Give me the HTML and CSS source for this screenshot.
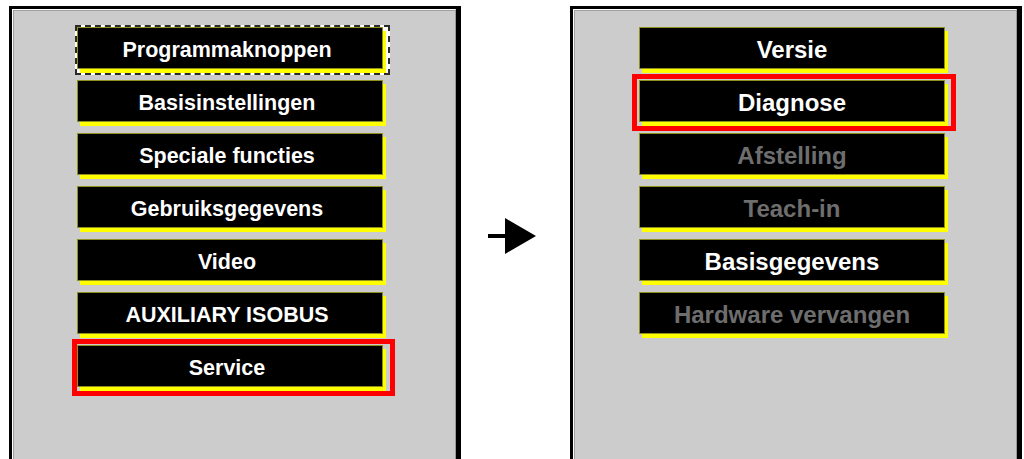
FILE: index.html
```html
<!DOCTYPE html>
<html lang="nl">
<head>
    <meta charset="UTF-8">
    <meta name="viewport" content="width=device-width, initial-scale=1.0">
    <title>Menu - Service</title>
    <link rel="stylesheet" href="styles.css">
</head>
<body>
    <div class="screens">
        <div class="panel panel-left">
            <div class="inner">
                <div class="menu">
                    <div class="focus"><div class="btn">Programmaknoppen</div></div>
                    <div class="btn">Basisinstellingen</div>
                    <div class="btn">Speciale functies</div>
                    <div class="btn">Gebruiksgegevens</div>
                    <div class="btn">Video</div>
                    <div class="btn">AUXILIARY ISOBUS</div>
                    <div class="selected"><div class="btn">Service</div></div>
                </div>
            </div>
        </div>

        <div class="arrow">
            <svg width="48" height="36" viewBox="0 0 48 36">
                <rect x="0" y="16" width="20" height="4" fill="#000"/>
                <polygon points="17,0 48,18 17,36" fill="#000"/>
            </svg>
        </div>

        <div class="panel panel-right">
            <div class="inner">
                <div class="menu">
                    <div class="btn">Versie</div>
                    <div class="selected right"><div class="btn">Diagnose</div></div>
                    <div class="btn disabled">Afstelling</div>
                    <div class="btn disabled">Teach-in</div>
                    <div class="btn">Basisgegevens</div>
                    <div class="btn disabled">Hardware vervangen</div>
                </div>
            </div>
        </div>
    </div>
</body>
</html>
```

FILE: styles.css
```css
body {
    margin: 0;
    padding: 6px 0 0 9px;
    background-color: #fff;
    font-family: "Liberation Sans", Arial, sans-serif;
    overflow: hidden;
    height: 459px;
    box-sizing: border-box;
}
.screens {
    display: flex;
    align-items: center;
}
.panel {
    width: 452px;
    height: 460px;
    box-sizing: border-box;
    border-style: solid;
    border-color: #000;
    border-width: 3px 5px 0 3px;
    background-color: #fff;
}
.inner {
    height: 100%;
    box-sizing: border-box;
    border: 1px solid #fff;
    border-right-color: #999;
    box-shadow: inset 1px 1px 0 #a0a0a0;
    background-color: #cccccc;
}
.panel-left .inner {
    padding: 17px 0 0 64px;
}
.panel-right .inner {
    padding: 17px 0 0 65px;
}
.menu {
    display: flex;
    flex-direction: column;
    align-items: flex-start;
    gap: 11px;
}
.btn {
    width: 306px;
    height: 42px;
    box-sizing: border-box;
    padding: 5px 6px 0 0;
    background-color: #000;
    border: 1px solid #8f8f1c;
    box-shadow: 3px 4px 0 #ffff00;
    color: #fff;
    font-size: 21.5px;
    font-weight: bold;
    display: flex;
    align-items: center;
    justify-content: center;
}
.panel-right .btn {
    font-size: 24px;
    padding: 3px 0 0 0;
}
.btn.disabled {
    color: #6e6e6e;
}
.focus {
    border: 2px dashed #2a2a2a;
    background-color: #fff;
    padding: 0 5px 4px 0;
    margin: -2px 0 -6px -2px;
}
.selected {
    border: 5px solid #ff0000;
    padding: 1px 7px 4px 0;
    margin: -6px 0 -9px -5px;
}
.selected.right {
    padding: 1px 6px 4px 2px;
    margin: -6px 0 -9px -7px;
}
.arrow {
    width: 109px;
    display: flex;
    justify-content: center;
    padding-right: 8px;
    box-sizing: border-box;
}
```
